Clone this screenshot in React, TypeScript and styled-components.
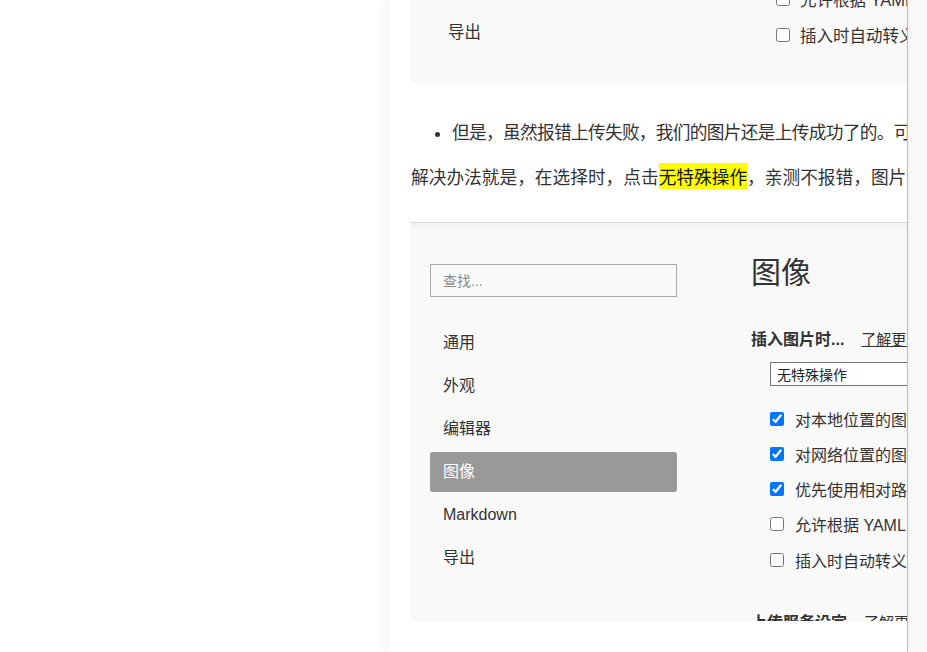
import React from "react";
import styled, { createGlobalStyle } from "styled-components";

const Global = createGlobalStyle`
  html, body { margin: 0; padding: 0; background: #fff; }
  body { font-family: "Noto Sans CJK SC", "Liberation Sans", sans-serif; color: #333; }
  #root { width: 927px; height: 652px; }
`;

const uiFont = `"Liberation Sans", "Noto Sans CJK SC", sans-serif`;

const Page = styled.div`
  display: flex;
  width: 927px;
  height: 652px;
  overflow: hidden;
  background: #fff;
`;

const Blank = styled.div`
  flex: 0 0 389px;
`;

const Article = styled.main`
  flex: 0 0 518px;
  box-sizing: border-box;
  padding-left: 22px;
  background: #fff;
  overflow: hidden;
  box-shadow: -4px 0 14px rgba(0, 0, 0, 0.05);
  position: relative;
  z-index: 1;
`;

const Rail = styled.div`
  flex: 0 0 19px;
  border-left: 1px solid #bdbdbd;
  background: #f8f8f8;
`;

/* ---------- screenshot 1 (bottom of settings window) ---------- */
const ShotTop = styled.div`
  width: 720px;
  height: 83px;
  background: #f9f9f9;
  overflow: hidden;
  display: grid;
  grid-template-columns: 365px 1fr;
  font-family: ${uiFont};
`;

const ShotTopNav = styled.div`
  padding: 12px 0 0 37px;
  font-size: 16.5px;
  line-height: 40px;
  color: #333;
`;

const ShotTopChecks = styled.div`
  margin-top: -19px;
  display: flex;
  flex-direction: column;
`;

const CheckRow = styled.label<{ $h: number; $fs: number; $gap: number }>`
  display: flex;
  align-items: center;
  height: ${(p) => p.$h}px;
  gap: ${(p) => p.$gap}px;
  font-size: ${(p) => p.$fs}px;
  color: #333;
  white-space: nowrap;
`;

const Box = styled.input.attrs({ type: "checkbox", readOnly: true })`
  width: 14px;
  height: 14px;
  margin: 0;
  flex: 0 0 14px;
  accent-color: #0075ff;
`;

/* ---------- article text ---------- */
const List = styled.ul`
  margin: 34px 0 0;
  padding-left: 41px;
`;

const Item = styled.li`
  font-size: 17.7px;
  line-height: 28px;
  letter-spacing: -0.7px;
  white-space: nowrap;
  color: #333;

  &::marker {
    font-size: 14px;
  }
`;

const Para = styled.p`
  margin: 17px 0 0;
  font-size: 17.7px;
  line-height: 28px;
  white-space: nowrap;
  color: #333;
`;

const Mark = styled.mark`
  background: #ffff00;
  color: #111;
`;

/* ---------- screenshot 2 (settings window) ---------- */
const ShotMain = styled.div`
  margin-top: 32px;
  width: 720px;
  height: 399px;
  box-sizing: border-box;
  border-top: 1px solid #d6d6d6;
  background: linear-gradient(#f1f1f1, #f9f9f9 8px);
  overflow: hidden;
  display: grid;
  grid-template-columns: 247px 1fr;
  column-gap: 74px;
  padding-left: 19px;
  font-family: ${uiFont};
`;

const Sidebar = styled.nav`
  padding-top: 41px;
  display: flex;
  flex-direction: column;
`;

const Search = styled.div`
  height: 33px;
  box-sizing: border-box;
  border: 1px solid #a9a9a9;
  background: #fafafa;
  padding: 0 0 2px 12px;
  display: flex;
  align-items: center;
  font-size: 14px;
  color: #8a8a8a;
`;

const NavList = styled.div`
  margin-top: 26px;
  display: flex;
  flex-direction: column;
  gap: 3px;
`;

const NavItem = styled.div<{ $active?: boolean }>`
  height: 40px;
  line-height: 40px;
  padding-left: 13px;
  border-radius: 3px;
  font-size: 16px;
  color: ${(p) => (p.$active ? "#fff" : "#333")};
  background: ${(p) => (p.$active ? "#999" : "transparent")};
`;

const Panel = styled.section`
  padding-top: 29px;
  display: flex;
  flex-direction: column;
  white-space: nowrap;
`;

const PanelTitle = styled.h1`
  margin: 0;
  font-size: 30px;
  line-height: 36px;
  font-weight: normal;
  color: #333;
  font-family: "Noto Sans CJK SC", sans-serif;
`;

const GroupHead = styled.div<{ $mt: number }>`
  margin-top: ${(p) => p.$mt}px;
  display: flex;
  align-items: baseline;
  gap: 17px;
  line-height: 24px;
`;

const GroupName = styled.span`
  font-size: 16px;
  font-weight: bold;
  color: #333;
`;

const More = styled.a`
  font-size: 15px;
  color: #333;
  text-decoration: underline;
`;

const Select = styled.div`
  margin: 10px 0 0 19px;
  width: 320px;
  height: 24px;
  box-sizing: border-box;
  border: 1px solid #767676;
  background: #fff;
  padding: 0 0 1px 6px;
  display: flex;
  align-items: center;
  font-size: 14px;
  color: #222;
`;

const Checks = styled.div`
  margin: 15px 0 0 19px;
  display: flex;
  flex-direction: column;
`;

const navItems = ["通用", "外观", "编辑器", "图像", "Markdown", "导出"];

const options: { label: string; checked: boolean }[] = [
  { label: "对本地位置的图片应用上述规则", checked: true },
  { label: "对网络位置的图片应用上述规则", checked: true },
  { label: "优先使用相对路径", checked: true },
  { label: "允许根据 YAML 设置自动上传图片", checked: false },
  { label: "插入时自动转义图片 URL", checked: false },
];

export default function App() {
  return (
    <>
      <Global />
      <Page>
        <Blank />
        <Article>
          <ShotTop>
            <ShotTopNav>导出</ShotTopNav>
            <ShotTopChecks>
              <CheckRow $h={36} $fs={16.5} $gap={10}>
                <Box checked={false} />
                允许根据 YAML 设置自动上传图片
              </CheckRow>
              <CheckRow $h={36} $fs={16.5} $gap={10}>
                <Box checked={false} />
                插入时自动转义图片 URL
              </CheckRow>
            </ShotTopChecks>
          </ShotTop>

          <List>
            <Item>但是，虽然报错上传失败，我们的图片还是上传成功了的。可以在图床中看到。</Item>
          </List>
          <Para>
            解决办法就是，在选择时，点击<Mark>无特殊操作</Mark>，亲测不报错，图片正常插入。
          </Para>

          <ShotMain>
            <Sidebar>
              <Search>查找...</Search>
              <NavList>
                {navItems.map((n) => (
                  <NavItem key={n} $active={n === "图像"}>
                    {n}
                  </NavItem>
                ))}
              </NavList>
            </Sidebar>
            <Panel>
              <PanelTitle>图像</PanelTitle>
              <GroupHead $mt={40}>
                <GroupName>插入图片时...</GroupName>
                <More>了解更多</More>
              </GroupHead>
              <Select>无特殊操作</Select>
              <Checks>
                {options.map((o) => (
                  <CheckRow key={o.label} $h={35.25} $fs={16} $gap={11}>
                    <Box checked={o.checked} />
                    {o.label}
                  </CheckRow>
                ))}
              </Checks>
              <GroupHead $mt={34}>
                <GroupName>上传服务设定</GroupName>
                <More>了解更多</More>
              </GroupHead>
            </Panel>
          </ShotMain>
        </Article>
        <Rail />
      </Page>
    </>
  );
}
